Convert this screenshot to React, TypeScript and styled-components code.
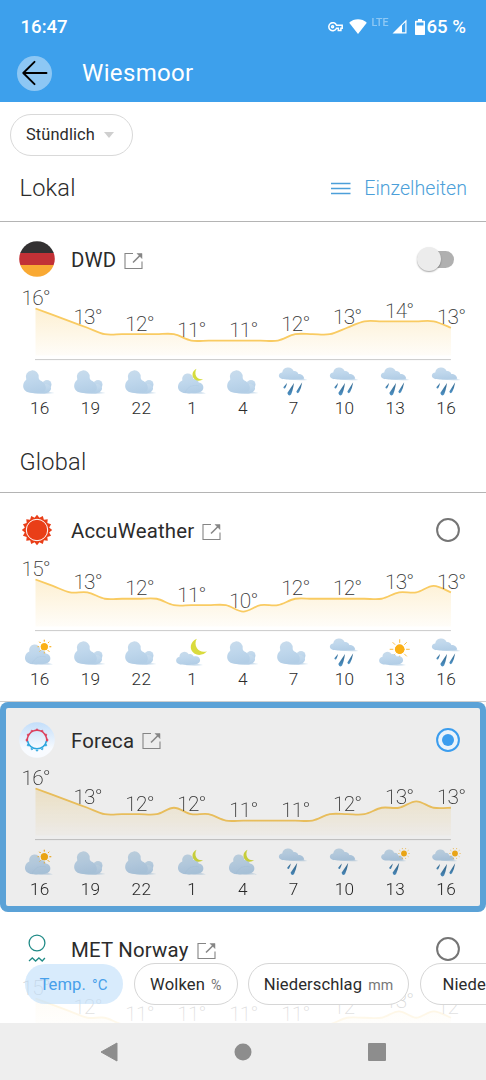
import React from "react";
import styled, { createGlobalStyle, css } from "styled-components";

const GlobalStyle = createGlobalStyle`
  *, *::before, *::after { box-sizing: border-box; }
  body { margin: 0; background: #fff; }
  svg { display: block; flex: none; }
`;

const Screen = styled.div`
  display: flex;
  flex-direction: column;
  width: 486px;
  height: 1080px;
  overflow: hidden;
  background: #fff;
  color: #2b2b2b;
  font-family: Roboto, "Liberation Sans", sans-serif;
`;

const TopArea = styled.header`
  flex: none;
  height: 101.5px;
  background: #3da0ec;
  color: #fff;
`;

const StatusBar = styled.div`
  display: flex;
  align-items: center;
  height: 52px;
  padding: 1px 20px 0 20.5px;
  font-size: 18.6px;
  font-weight: 500;
`;

const StatusIcons = styled.div`
  display: flex;
  align-items: center;
  margin-left: auto;
`;

const Percent = styled.span`
  margin-left: 2px;
  font-size: 18.6px;
  white-space: pre;
`;

const Network = styled.span`
  align-self: flex-start;
  margin: 1px 3px 0 4px;
  font-size: 10.6px;
  line-height: 12px;
  letter-spacing: 0.1px;
  opacity: 0.42;
`;

const AppBar = styled.div`
  display: flex;
  align-items: center;
  gap: 30px;
  height: 42px;
  padding-left: 17px;
`;

const BackButton = styled.button`
  display: grid;
  place-items: center;
  width: 35px;
  height: 35px;
  padding: 0;
  border: 0;
  border-radius: 50%;
  background: #8dc7f4;
`;

const City = styled.h1`
  margin: 0;
  font-size: 24px;
  font-weight: 400;
  letter-spacing: 0.35px;
`;

const Main = styled.main`
  position: relative;
  flex: 1;
  min-height: 0;
  overflow: hidden;
`;

const Filter = styled.button`
  display: flex;
  align-items: center;
  gap: 9px;
  width: 123px;
  height: 42px;
  margin: 12px 0 0 9.5px;
  padding: 0 0 0 15.5px;
  border: 1.5px solid #d9d9d9;
  border-radius: 21px;
  background: #fff;
  color: #2b2b2b;
  font: 400 16.4px Roboto, sans-serif;
  letter-spacing: 0.1px;
`;

const SectionHead = styled.div<{ $height: number }>`
  display: flex;
  align-items: center;
  justify-content: space-between;
  height: ${(p) => p.$height}px;
  padding: 0 19px 0 19.5px;
  border-bottom: 1px solid #b4b4b4;
`;

const SectionTitle = styled.h2`
  margin: 0;
  font-size: 23.6px;
  font-weight: 300;
  letter-spacing: 0.2px;
`;

const DetailsLink = styled.a`
  display: flex;
  align-items: center;
  gap: 13px;
  color: #4c9fd9;
  font-size: 19.6px;
  font-weight: 300;
`;

const Card = styled.article<{ $selected?: boolean; $divider?: boolean }>`
  height: 209.3px;
  ${(p) => p.$divider && css`border-bottom: 1px solid #cfcfcf;`}
  ${(p) =>
    p.$selected &&
    css`
      border-radius: 8px;
      background: #ededed;
      box-shadow: inset 0 0 0 6px #5ba2d7;
    `}
`;

const CardHead = styled.div`
  display: flex;
  align-items: center;
  height: 54px;
  padding: 21px 26px 0 18.5px;
`;

const Provider = styled.h3`
  margin: 0 8px 0 16.5px;
  padding-top: 2px;
  font-size: 20.4px;
  font-weight: 400;
  letter-spacing: 0.2px;
`;

const Control = styled.div`
  margin-left: auto;
`;

const Forecast = styled.div<{ $dim?: boolean }>`
  ${(p) => p.$dim && css`filter: brightness(0.93);`}
`;

const Hours = styled.div`
  display: flex;
  padding-left: 14.4px;
`;

const HourCell = styled.div`
  flex: none;
  width: 50.8px;
  text-align: center;
`;

const HourLabel = styled.div`
  font-size: 17.2px;
  line-height: 20px;
  font-weight: 300;
  letter-spacing: 0.3px;
`;

const ChipTray = styled.div`
  position: absolute;
  left: 0;
  right: 0;
  bottom: 0;
  height: 61px;
  padding: 0.5px 0 0 23.5px;
  display: flex;
  align-items: flex-start;
  gap: 10.5px;
  overflow: hidden;
  background: linear-gradient(rgba(255, 255, 255, 0.68), rgba(255, 255, 255, 0.88));
`;

const Chip = styled.button<{ $active?: boolean; $width: number }>`
  flex: none;
  width: ${(p) => p.$width}px;
  height: 42px;
  padding: 2px 0 0;
  border: 1.5px solid ${(p) => (p.$active ? "transparent" : "#d6d6d6")};
  border-radius: 21px;
  background: ${(p) => (p.$active ? "rgba(190, 222, 250, 0.6)" : "#fff")};
  background-clip: padding-box;
  color: ${(p) => (p.$active ? "#48a0ea" : "#2b2b2b")};
  font: 400 16.6px Roboto, sans-serif;
  letter-spacing: 0.1px;
  white-space: nowrap;
`;

const Unit = styled.small<{ $active?: boolean }>`
  margin-left: 6px;
  font-size: ${(p) => (p.$active ? 15 : 14.2)}px;
  color: ${(p) => (p.$active ? "#48a0ea" : "#777")};
`;

const NavBar = styled.nav`
  flex: none;
  display: flex;
  align-items: center;
  justify-content: space-between;
  height: 57px;
  padding: 0 100px 0 99.5px;
  background: #eee;
`;

type IconKind =
  | "cloud" | "cloudMoon" | "cloudSun" | "moonCloud" | "sunCloud"
  | "rain3" | "rain2" | "rain2Sun" | "rain3Sun";

const BigCloud = () => (
  <g>
    <path d="M20 29.3c4-2 9-3.500 13-1.500l7.500 1.200c-6 1-14 .8-20.500.3z" fill="#cfe0ee" />
    <circle cx="33" cy="20.500" r="4.500" fill="url(#cloudFill)" />
    <path d="M26 29.200c5 .8 10-.3 11-4.200.3-3-2.500-5.500-6-5z" fill="url(#cloudFill)" />
    <path d="M12.300 15.400a6.500 6.500 0 1 1 12.400-1.500c.2 1.500 1.200 2.300 2.800 3.200 4 2.300 5.800 7.300 3 10.400-2.500 2.700-8.500 2.200-14.500 1.200-5.200-.7-7.500-4.500-6.700-8.200.4-2.200 1.500-3.500 3-5.100z" fill="url(#cloudFill)" />
  </g>
);

const MidCloud = () => (
  <g>
    <path d="M20 29.300c5-2 9-3 13-1.500l6 1.400c-6 .8-13 .7-19 .1z" fill="#cfe0ee" />
    <path d="M15.300 16.500a5.600 5.600 0 1 1 11-1.500c3.500-.2 5 1.700 5.400 3.500 3.700.3 5.300 3.500 4.500 6.300-1 3.600-5 4.500-10 4.500-6.200.2-11 .3-13.800-2.600-2.800-3.300-1.200-8.800 2.900-10.200z" fill="url(#cloudFill)" />
    <path d="M18 29c2-6 8-9 14-7" fill="none" stroke="#a9c5df" strokeOpacity=".35" />
  </g>
);

const LowCloud = () => (
  <g>
    <path d="M19 30.300c4-2 8-2.500 12-1.200l5 1c-5 .8-11 .6-17 .2z" fill="#cfe0ee" />
    <path d="M12.500 21.800a5 5 0 0 1 9.300-2.600c2.200-.6 4 .3 5 2.300 3.200-1 6.200.5 6.300 3.400 0 3.500-4 4.700-8.500 4.900-5 .3-10 .3-12.700-.7-4-1.500-3.500-6.500.6-7.300z" fill="url(#cloudFill)" />
  </g>
);

const RainCloud = ({ narrow }: { narrow?: boolean }) => (
  <g transform={narrow ? "translate(1.600 1.200) scale(.88 .93)" : undefined}>
    <path d="M20 15.500c4-1.500 9-2.500 13-1l6.500 1.500c-6 .6-13 .3-19.500-.5z" fill="#c9dcec" />
    <path d="M14.200 8.500a6 6 0 0 1 11.400-1.500c2.700-.3 4.300 1.200 4.700 2.900 3.200-.1 5.700 1.800 5.900 4.800-4 .7-9 .7-14.200.7-4 0-7 .2-9-.8-3.500-1.800-2.300-6 1.200-6.100z" fill="url(#cloudFill)" />
  </g>
);

const Drop = ({ x, y, dx, dy, w }: { x: number; y: number; dx: number; dy: number; w: number }) => (
  <path
    fill="url(#dropFill)"
    d={`M${x} ${y}L${x - dx - w * 0.35} ${y + dy - w}Q${x - dx} ${y + dy + 0.6} ${x - dx + w * 0.75} ${y + dy - w * 0.6}Q${x - dx * 0.2} ${y + dy * 0.55} ${x} ${y}z`}
  />
);

const Sun = ({ x, y, r, ray, n = 8 }: { x: number; y: number; r: number; ray: number; n?: number }) => (
  <g>
    <circle cx={x} cy={y} r={r} fill="#fbb016" />
    {Array.from({ length: n }, (_, i) => {
      const a = (i * 2 * Math.PI) / n;
      return (
        <line
          key={i}
          x1={x + Math.cos(a) * (r + 1.7)}
          y1={y + Math.sin(a) * (r + 1.7)}
          x2={x + Math.cos(a) * ray}
          y2={y + Math.sin(a) * ray}
          stroke="#f9b62c"
          strokeWidth={0.9}
        />
      );
    })}
  </g>
);

const TwoDrops = () => (
  <>
    <Drop x={22.800} y={18.500} dx={3} dy={6} w={1.800} />
    <Drop x={29.200} y={18} dx={5.500} dy={13} w={3.200} />
  </>
);

const ThreeDrops = () => (
  <>
    <Drop x={19} y={19} dx={3} dy={6} w={1.800} />
    <Drop x={26} y={19} dx={5.500} dy={13.500} w={3.400} />
    <Drop x={34.200} y={18.300} dx={5} dy={11.500} w={2.400} />
  </>
);

const drawings: Record<IconKind, React.ReactNode> = {
  cloud: <BigCloud />,
  cloudMoon: (
    <>
      <MidCloud />
      <path d="M29.500 4.800c-4.700 2-5.300 8-1.500 10.700 2.700 1.900 6 1.300 8.200-.4-3 .6-5.800-.4-7-2.800-1.200-2.400-1-5.300.3-7.500z" fill="#d5dc3e" />
    </>
  ),
  cloudSun: (<><Sun x={30.300} y={11.700} r={3.500} ray={7} /><MidCloud /><Sun x={30.300} y={11.700} r={3.500} ray={6.800} /></>),
  moonCloud: (
    <>
      <path d="M29.800 3.800c-7 3-8 11-2.500 14.700 4.200 2.600 9.700 1.400 12.700-2.200-4.300 1.300-8 .1-10-3-1.900-3-2-6.500-.2-9.500z" fill="#dadb3d" />
      <LowCloud />
    </>
  ),
  sunCloud: (<><Sun x={29.700} y={14.300} r={4.700} ray={10} /><LowCloud /><circle cx="29.700" cy="14.300" r="4.700" fill="#fbb016" /></>),
  rain3: (<><RainCloud /><ThreeDrops /></>),
  rain2: (<><RainCloud /><TwoDrops /></>),
  rain2Sun: (<><RainCloud narrow /><Sun x={34} y={8.500} r={2.900} ray={5.500} n={10} /><TwoDrops /></>),
  rain3Sun: (<><RainCloud narrow /><Sun x={34} y={8.500} r={2.900} ray={5.500} n={10} /><ThreeDrops /></>),
};

const WeatherIcon = ({ kind }: { kind: IconKind }) => (
  <svg width="50.800" height="34" viewBox="0 0 50.800 34" overflow="visible">
    {drawings[kind]}
  </svg>
);

const hourNames = [16, 19, 22, 1, 4, 7, 10, 13, 16];
const X0 = 35.5;
const STEP = 17.31;
const BASE = 83.6;
const DEGREE = 6.42;

function Chart({ temps, min }: { temps: number[]; min: number }) {
  const pts = temps.map((t, i) => [X0 + i * STEP, BASE - 19 - (t - min) * DEGREE]);
  const line = pts.reduce((d, p, i) => {
    if (i === 0) return `M${p[0]} ${p[1]}`;
    const a = pts[i - 1];
    const before = pts[i - 2] ?? a;
    const after = pts[i + 1] ?? p;
    const k = 0.16;
    return `${d}C${a[0] + (p[0] - before[0]) * k} ${a[1] + (p[1] - before[1]) * k} ${p[0] - (after[0] - a[0]) * k} ${p[1] - (after[1] - a[1]) * k} ${p[0]} ${p[1]}`;
  }, "");
  const end = pts[pts.length - 1][0];
  return (
    <svg width="486" height="88.300" viewBox="0 0 486 88.300" overflow="visible">
      <path d={`${line}L${end} ${BASE - 4}L${X0} ${BASE - 4}z`} fill="url(#areaFill)" />
      <line x1={X0 - 0.5} x2={end} y1={BASE} y2={BASE} stroke="#cacaca" strokeWidth="1" />
      <path d={line} fill="none" stroke="#f9cb62" strokeWidth="1.800" />
      {hourNames.map((_, i) => {
        const [x, y] = pts[i * 3];
        return (
          <text key={i} x={x + 0.2} y={y - 3.3} textAnchor="middle" fontSize="20.800" fontWeight="200" letterSpacing="-.8" fill="#333">
            {Math.round(temps[i * 3])}°
          </text>
        );
      })}
    </svg>
  );
}

const ExternalIcon = () => (
  <svg width="19" height="18" viewBox="0 0 19 18" fill="none" stroke="#858585" style={{ marginTop: 3 }}>
    <path d="M9 1.500H1v15h17V9.500" strokeWidth="1.100" />
    <path d="M9 10.500L17.300 2.200" strokeWidth="1.500" />
    <path d="M13 1.500h5v5z" fill="#858585" strokeWidth=".5" />
  </svg>
);

const starburst = Array.from({ length: 32 }, (_, i) => {
  const a = (i * Math.PI) / 16;
  const r = i % 2 ? 12.4 : 15.2;
  return `${18 + Math.sin(a) * r},${18 - Math.cos(a) * r}`;
}).join(" ");

const logos = {
  dwd: (
    <>
      <clipPath id="flag"><circle cx="18" cy="18" r="17.800" /></clipPath>
      <g clipPath="url(#flag)">
        <path d="M0 0h36v12H0z" fill="#333132" />
        <path d="M0 12h36v12H0z" fill="#c23136" />
        <path d="M0 24h36v12H0z" fill="#f9a933" />
      </g>
    </>
  ),
  accu: (
    <>
      <polygon points={starburst} fill="#e93e17" />
      <circle cx="18" cy="18" r="10.700" fill="none" stroke="#fff" strokeWidth="1" />
    </>
  ),
  foreca: (
    <>
      <circle cx="18" cy="18" r="17.800" fill="url(#forecaFill)" />
      <path d="M8.500 20a9.700 9.700 0 1 1 19 0" fill="none" stroke="#dc405d" strokeWidth="1.500" />
      <path d="M8.500 19a9.700 9.700 0 0 0 19 0" fill="none" stroke="#2ba5de" strokeWidth="1.500" />
      {Array.from({ length: 12 }, (_, i) => (
        <path key={i} d="M16.800 8L18 6.600 19.200 8z" transform={`rotate(${i * 30} 18 18)`} fill={i > 3 && i < 9 ? "#2ba5de" : "#dc405d"} stroke={i > 3 && i < 9 ? "#2ba5de" : "#dc405d"} strokeWidth=".5" />
      ))}
    </>
  ),
  met: (
    <g fill="none" stroke="#218b87" strokeWidth="1.300">
      <circle cx="18" cy="12" r="7.900" />
      <path d="M10 30l3.300-3 3.300 3 3.300-3 3.300 3 2.700-3" />
    </g>
  ),
};

const Radio = ({ on }: { on?: boolean }) => (
  <svg width="24" height="24" viewBox="0 0 24 24">
    <circle cx="12" cy="12" r="10.900" fill={on ? "#e9f3fb" : "none"} stroke={on ? "#3b9dee" : "#757575"} strokeWidth="2" />
    {on && <circle cx="12" cy="12" r="6" fill="#3b9dee" />}
  </svg>
);

const SwitchTrack = styled.div`
  position: relative;
  width: 33px;
  height: 17px;
  margin: 1px 6px 0 0;
  border-radius: 9px;
  background: #b0b0b0;
`;

const SwitchKnob = styled.span`
  position: absolute;
  left: -4px;
  top: -4px;
  width: 24px;
  height: 24px;
  border-radius: 50%;
  background: #ececec;
  box-shadow: 0 1px 1.5px rgba(0, 0, 0, 0.35);
`;

interface ProviderData {
  name: string;
  logo: keyof typeof logos;
  temps: number[];
  min: number;
  icons: IconKind[];
  control: "switch" | "radio" | "radioOn";
  divider?: boolean;
}

const dwd: ProviderData = {
  name: "DWD",
  logo: "dwd",
  min: 11,
  temps: [16, 15, 14, 13, 12, 12, 12, 12, 12, 11, 11, 11, 11, 11, 11, 12, 12, 12, 13, 14, 14, 14, 14, 14, 13],
  icons: ["cloud", "cloud", "cloud", "cloudMoon", "cloud", "rain3", "rain3", "rain3", "rain3"],
  control: "switch",
};

const globalProviders: ProviderData[] = [
  {
    name: "AccuWeather",
    logo: "accu",
    min: 10,
    temps: [15, 14, 13, 13, 12, 12, 12, 12, 11, 11, 11, 11, 10, 11, 11, 12, 12, 12, 12, 12, 12, 13, 13, 14, 13],
    icons: ["cloudSun", "cloud", "cloud", "moonCloud", "cloud", "cloud", "rain3", "sunCloud", "rain3"],
    control: "radio",
    divider: true,
  },
  {
    name: "Foreca",
    logo: "foreca",
    min: 11,
    temps: [16, 15, 14, 13, 12, 12, 12, 12, 13, 12, 12, 11, 11, 11, 11, 11, 11, 12, 12, 12, 13, 13, 14, 13, 13],
    icons: ["cloudSun", "cloud", "cloud", "cloudMoon", "cloudMoon", "rain2", "rain2", "rain2Sun", "rain3Sun"],
    control: "radioOn",
  },
  {
    name: "MET Norway",
    logo: "met",
    min: 10,
    temps: [15, 14, 13, 12, 12, 11, 11, 11, 11, 11, 11, 11, 11, 11, 11, 11, 11, 11, 12, 12, 12, 13, 12, 13, 12],
    icons: ["cloud", "cloud", "cloud", "cloudMoon", "cloud", "rain2", "rain2", "rain2", "rain3"],
    control: "radio",
  },
];

function ProviderCard({ data }: { data: ProviderData }) {
  const selected = data.control === "radioOn";
  return (
    <Card $selected={selected} $divider={data.divider}>
      <CardHead>
        <svg width="36" height="36" viewBox="0 0 36 36">{logos[data.logo]}</svg>
        <Provider>{data.name}</Provider>
        <ExternalIcon />
        <Control>
          {data.control === "switch" ? <SwitchTrack><SwitchKnob /></SwitchTrack> : <Radio on={selected} />}
        </Control>
      </CardHead>
      <Forecast $dim={selected}>
        <Chart temps={data.temps} min={data.min} />
        <Hours>
          {hourNames.map((hour, i) => (
            <HourCell key={i}>
              <WeatherIcon kind={data.icons[i]} />
              <HourLabel>{hour}</HourLabel>
            </HourCell>
          ))}
        </Hours>
      </Forecast>
    </Card>
  );
}

const Gradients = () => (
  <svg width="0" height="0" style={{ position: "absolute" }}>
    <defs>
      <linearGradient id="cloudFill" x1="0" y1="0" x2="0.2" y2="1">
        <stop offset="0" stopColor="#c9dcec" />
        <stop offset=".5" stopColor="#bfd7ec" />
        <stop offset="1" stopColor="#b3cee6" />
      </linearGradient>
      <linearGradient id="dropFill" x1="0" y1="0" x2="0" y2="1">
        <stop offset="0" stopColor="#2f6288" />
        <stop offset="1" stopColor="#4f93c6" />
      </linearGradient>
      <linearGradient id="areaFill" x1="0" y1="0" x2="0" y2="1">
        <stop offset="0" stopColor="#f8c75a" stopOpacity=".27" />
        <stop offset="1" stopColor="#f8c75a" stopOpacity=".04" />
      </linearGradient>
      <linearGradient id="forecaFill" x1="0" y1="0" x2="0" y2="1">
        <stop offset="0" stopColor="#c3defa" />
        <stop offset=".75" stopColor="#f8fbff" />
      </linearGradient>
    </defs>
  </svg>
);

export default function App() {
  return (
    <Screen>
      <GlobalStyle />
      <Gradients />
      <TopArea>
        <StatusBar>
          <span>16:47</span>
          <StatusIcons>
            <svg width="15" height="10" viewBox="0 0 15 10" fill="none" stroke="#fff" strokeWidth="1.500">
              <path d="M8.500 3.200H14.200V6.200H12.900V8.500H10.300V6.200H8.500A4 4 0 1 1 8.500 3.200z" />
              <circle cx="4.600" cy="4.800" r="1" />
            </svg>
            <svg width="18" height="15" viewBox="0 0 18 15" style={{ marginLeft: 6 }}>
              <path d="M9 15L.2 3.700C5-.9 13-.9 17.800 3.700z" fill="#fff" />
            </svg>
            <Network>LTE</Network>
            <svg width="15" height="15" viewBox="0 0 15 15">
              <path d="M.5 14.500L14.500.5v14z" fill="#fff" />
              <path d="M10 6.500L13.300 3.200v10H10z" fill="#3da0ec" />
            </svg>
            <svg width="10" height="16" viewBox="0 0 10 16" style={{ marginLeft: 8 }}>
              <path d="M3 0h4v1.800h2.300q.7 0 .7.700v12.800q0 .7-.7.700H.7q-.7 0-.7-.7V2.500q0-.7.7-.7H3z" fill="#fff" />
              <path d="M1.500 3.500h7v3h-7z" fill="#3da0ec" />
            </svg>
            <Percent>65 %</Percent>
          </StatusIcons>
        </StatusBar>
        <AppBar>
          <BackButton aria-label="Zurück">
            <svg width="26" height="26" viewBox="0 0 26 26" fill="none" stroke="#000" strokeWidth="1.900" strokeLinecap="round" strokeLinejoin="round">
              <path d="M24.500 13H1.500M12.500 1.800L1.300 13l11.200 11.200" />
            </svg>
          </BackButton>
          <City>Wiesmoor</City>
        </AppBar>
      </TopArea>
      <Main>
        <Filter>
          Stündlich
          <svg width="10" height="6" viewBox="0 0 10 6"><path d="M0 0h10L5 6z" fill="#cfcfcf" /></svg>
        </Filter>
        <SectionHead $height={66.3}>
          <SectionTitle>Lokal</SectionTitle>
          <DetailsLink>
            <svg width="20" height="13" viewBox="0 0 20 13" stroke="#4c9fd9" strokeWidth="1.700">
              <path d="M0 1.500h19.500M0 6.500h19.500M0 11.500h19.500" />
            </svg>
            Einzelheiten
          </DetailsLink>
        </SectionHead>
        <ProviderCard data={dwd} />
        <SectionHead $height={61.9}>
          <SectionTitle>Global</SectionTitle>
        </SectionHead>
        {globalProviders.map((p) => <ProviderCard key={p.name} data={p} />)}
        <ChipTray>
          <Chip $active $width={100}>Temp.<Unit $active>°C</Unit></Chip>
          <Chip $width={103.5}>Wolken<Unit>%</Unit></Chip>
          <Chip $width={161}>Niederschlag<Unit>mm</Unit></Chip>
          <Chip $width={161}>Niederschlag<Unit>%</Unit></Chip>
        </ChipTray>
      </Main>
      <NavBar>
        <svg width="18" height="20" viewBox="0 0 18 20"><path d="M17 1v18L1 10z" fill="#8d8d8d" stroke="#8d8d8d" strokeLinejoin="round" /></svg>
        <svg width="18" height="18" viewBox="0 0 18 18"><circle cx="9" cy="9" r="8.500" fill="#8d8d8d" /></svg>
        <svg width="18" height="18" viewBox="0 0 18 18"><rect width="18" height="18" rx="1" fill="#8d8d8d" /></svg>
      </NavBar>
    </Screen>
  );
}
